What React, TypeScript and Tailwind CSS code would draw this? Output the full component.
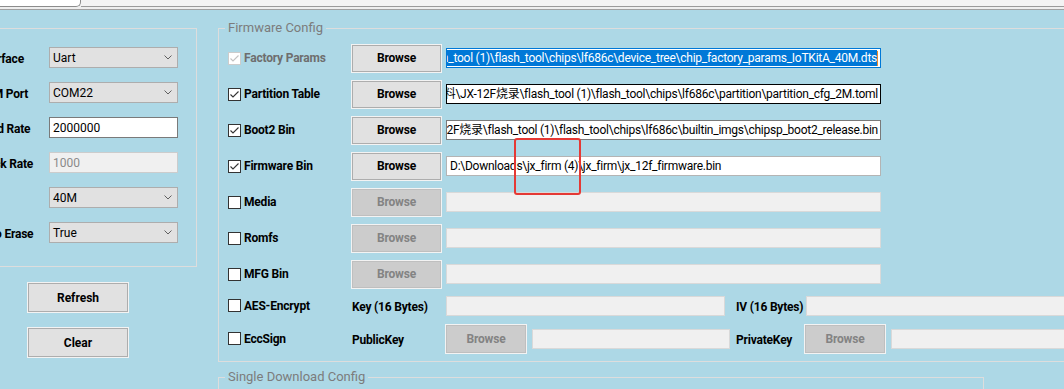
import React from "react";

const Check = ({ checked, disabled }: { checked?: boolean; disabled?: boolean }) => {
    return (
        <div className={`w-[13px] h-[13px] shrink-0 border bg-white flex items-center justify-center ${disabled ? "border-[#cccccc]" : "border-[#333333]"}`}>
            {checked && (
                <svg width="11" height="11" viewBox="0 0 11 11">
                    <path d="M1.5 5.5 L4 8 L9.5 2.5" fill="none" stroke={disabled ? "#c2c2c2" : "#333333"} strokeWidth="1.1" />
                </svg>
            )}
        </div>
    );
};

const Combo = ({ value }: { value: string }) => {
    return (
        <div className="w-[129px] h-[21px] border border-[#adadad] bg-[#e1e1e1] flex items-center justify-between pl-[3px] pr-[5px] text-[12px] text-black">
            <span>{value}</span>
            <svg width="8" height="5" viewBox="0 0 8 5">
                <path d="M0.5 0.5 L4 4 L7.5 0.5" fill="none" stroke="#606060" strokeWidth="1" />
            </svg>
        </div>
    );
};

const Browse = ({ disabled, w = "w-[89px]", h = "h-[27px]" }: { disabled?: boolean; w?: string; h?: string }) => {
    return (
        <button
            className={`${w} ${h} shrink-0 border text-[12px] font-bold tracking-[-0.2px] shadow-[0_0_0_1px_#f3f3f3] ${disabled ? "bg-[#cccccc] border-[#bfbfbf] text-[#838383]" : "bg-[#e1e1e1] border-[#adadad] text-black"}`}
        >
            Browse
        </button>
    );
};

// path box, scrolled to the end like the real textbox
const Path = ({ text, border, selected }: { text: string; border: string; selected?: boolean }) => {
    return (
        <div className={`w-[435px] h-[20px] shrink-0 border ${border} bg-white flex justify-end items-center overflow-hidden px-[2px] text-[12px] tracking-[-0.25px] whitespace-nowrap`}>
            <span className={selected ? "bg-[#0078d7] text-white leading-[16px]" : "text-black leading-[16px]"}>{text}</span>
            {selected && <span className="w-[1px] h-[15px] bg-[#f08c28] shrink-0"></span>}
        </div>
    );
};

const Empty = ({ w }: { w: string }) => {
    return <div className={`${w} h-[20px] shrink-0 border border-[#d9d9d9] bg-[#f0f0f0]`}></div>;
};

const Label = ({ children, gray }: { children: React.ReactNode; gray?: boolean }) => {
    return <span className={`text-[12px] font-bold tracking-[-0.2px] whitespace-nowrap ${gray ? "text-[#6e6e6e]" : "text-black"}`}>{children}</span>;
};

const FileRow = ({ name, checked, dimmed, enabled, children }: { name: string; checked?: boolean; dimmed?: boolean; enabled?: boolean; children?: React.ReactNode }) => {
    return (
        <div className="h-[36px] flex items-center">
            <div className="w-[124px] shrink-0 flex items-center gap-[3px]">
                <Check checked={checked} disabled={dimmed} />
                <Label gray={dimmed}>{name}</Label>
            </div>
            <Browse disabled={!enabled} />
            <div className="w-[5px] shrink-0"></div>
            {children ? children : <Empty w="w-[435px]" />}
        </div>
    );
};

export default function App() {
    const left = [
        { label: "Interface", el: <Combo value="Uart" /> },
        { label: "COM Port", el: <Combo value="COM22" /> },
        {
            label: "Baud Rate",
            el: <div className="w-[129px] h-[21px] border border-[#7a7a7a] bg-white flex items-center pl-[3px] text-[12px] text-black">2000000</div>,
        },
        {
            label: "Clock Rate",
            el: <div className="w-[129px] h-[21px] border border-[#cccccc] bg-[#f0f0f0] flex items-center pl-[3px] text-[12px] text-[#8a8a8a]">1000</div>,
        },
        { label: "", el: <Combo value="40M" /> },
        { label: "Auto Erase", el: <Combo value="True" /> },
    ];

    return (
        <div className="relative w-[1064px] h-[389px] overflow-hidden bg-[#add8e6] font-['Roboto','Noto_Sans_CJK_SC',sans-serif]">
            {/* tab strip */}
            <div className="h-[10px] bg-[#eeeeee] border-b border-[#a0a0a0] flex items-start">
                <div className="w-[81px] h-[7px] bg-white border-r border-b border-[#8c8c8c] rounded-br-[5px]"></div>
                <div className="flex-1 h-[7px] border-b border-[#9a9a9a] bg-[#f3f3f3]"></div>
            </div>

            <div className="flex">
                {/* left side */}
                <div className="w-[218px] shrink-0 overflow-hidden">
                    <div className="ml-[-32px] w-[229px] mt-[18px] h-[239px] border border-[#dddddd] pt-[18px] pl-[8px] flex flex-col gap-[14px]">
                        {left.map((r, i) => (
                            <div key={i} className="flex items-center h-[21px]">
                                <div className="w-[72px] shrink-0">
                                    <Label>{r.label}</Label>
                                </div>
                                {r.el}
                            </div>
                        ))}
                    </div>
                    <div className="ml-[28px] mt-[16px] flex flex-col gap-[16px]">
                        <button className="w-[100px] h-[29px] bg-[#e1e1e1] border border-[#adadad] shadow-[0_0_0_1px_#f3f3f3] text-[12px] font-bold text-black">Refresh</button>
                        <button className="w-[100px] h-[29px] bg-[#e1e1e1] border border-[#adadad] shadow-[0_0_0_1px_#f3f3f3] text-[12px] font-bold text-black">Clear</button>
                    </div>
                </div>

                {/* right side */}
                <div className="shrink-0 pt-[9px]">
                    <fieldset className="w-[900px] border border-[#dddddd] pl-[9px] pt-[3px] pb-[3px]">
                        <legend className="ml-[-3px] px-[3px] text-[13px] leading-[18px] text-[#7c7c7c]">Firmware Config</legend>
                        <FileRow name="Factory Params" checked dimmed enabled>
                            <Path border="border-[#0078d7]" selected text="ash_tool (1)\flash_tool\chips\lf686c\device_tree\chip_factory_params_IoTKitA_40M.dts" />
                        </FileRow>
                        <FileRow name="Partition Table" checked enabled>
                            <Path border="border-black" text="料\JX-12F烧录\flash_tool (1)\flash_tool\chips\lf686c\partition\partition_cfg_2M.toml" />
                        </FileRow>
                        <FileRow name="Boot2 Bin" checked enabled>
                            <Path border="border-[#7a7a7a]" text="-12F烧录\flash_tool (1)\flash_tool\chips\lf686c\builtin_imgs\chipsp_boot2_release.bin" />
                        </FileRow>
                        <FileRow name="Firmware Bin" checked enabled>
                            <div className="w-[435px] h-[20px] shrink-0 border border-[#b4b4b4] bg-white flex items-center px-[3px] text-[12px] tracking-[-0.25px] text-black whitespace-nowrap">
                                D:\Downloads\jx_firm (4)\jx_firm\jx_12f_firmware.bin
                            </div>
                        </FileRow>
                        <FileRow name="Media" />
                        <FileRow name="Romfs" />
                        <FileRow name="MFG Bin" />

                        <div className="h-[27px] flex items-center">
                            <div className="w-[124px] shrink-0 flex items-center gap-[3px]">
                                <Check />
                                <Label>AES-Encrypt</Label>
                            </div>
                            <div className="w-[94px] shrink-0">
                                <Label>Key (16 Bytes)</Label>
                            </div>
                            <Empty w="w-[279px]" />
                            <div className="w-[11px] shrink-0"></div>
                            <div className="w-[70px] shrink-0">
                                <Label>IV (16 Bytes)</Label>
                            </div>
                            <Empty w="w-[300px]" />
                        </div>

                        <div className="h-[39px] flex items-center">
                            <div className="w-[124px] shrink-0 flex items-center gap-[3px]">
                                <Check />
                                <Label>EccSign</Label>
                            </div>
                            <div className="w-[94px] shrink-0">
                                <Label>PublicKey</Label>
                            </div>
                            <Browse disabled w="w-[80px]" h="h-[28px]" />
                            <div className="w-[6px] shrink-0"></div>
                            <Empty w="w-[198px]" />
                            <div className="w-[6px] shrink-0"></div>
                            <div className="w-[69px] shrink-0">
                                <Label>PrivateKey</Label>
                            </div>
                            <Browse disabled w="w-[80px]" h="h-[28px]" />
                            <div className="w-[6px] shrink-0"></div>
                            <Empty w="w-[200px]" />
                        </div>
                    </fieldset>

                    <fieldset className="mt-[6px] w-[766px] h-[60px] border border-[#dddddd] pl-[9px]">
                        <legend className="ml-[-3px] px-[3px] text-[13px] leading-[18px] text-[#7c7c7c]">Single Download Config</legend>
                    </fieldset>
                </div>
            </div>

            {/* red highlight box */}
            <div className="absolute left-[514px] top-[138px] w-[67px] h-[57px] border-2 border-[#e53935] rounded-[3px]"></div>
        </div>
    );
}
